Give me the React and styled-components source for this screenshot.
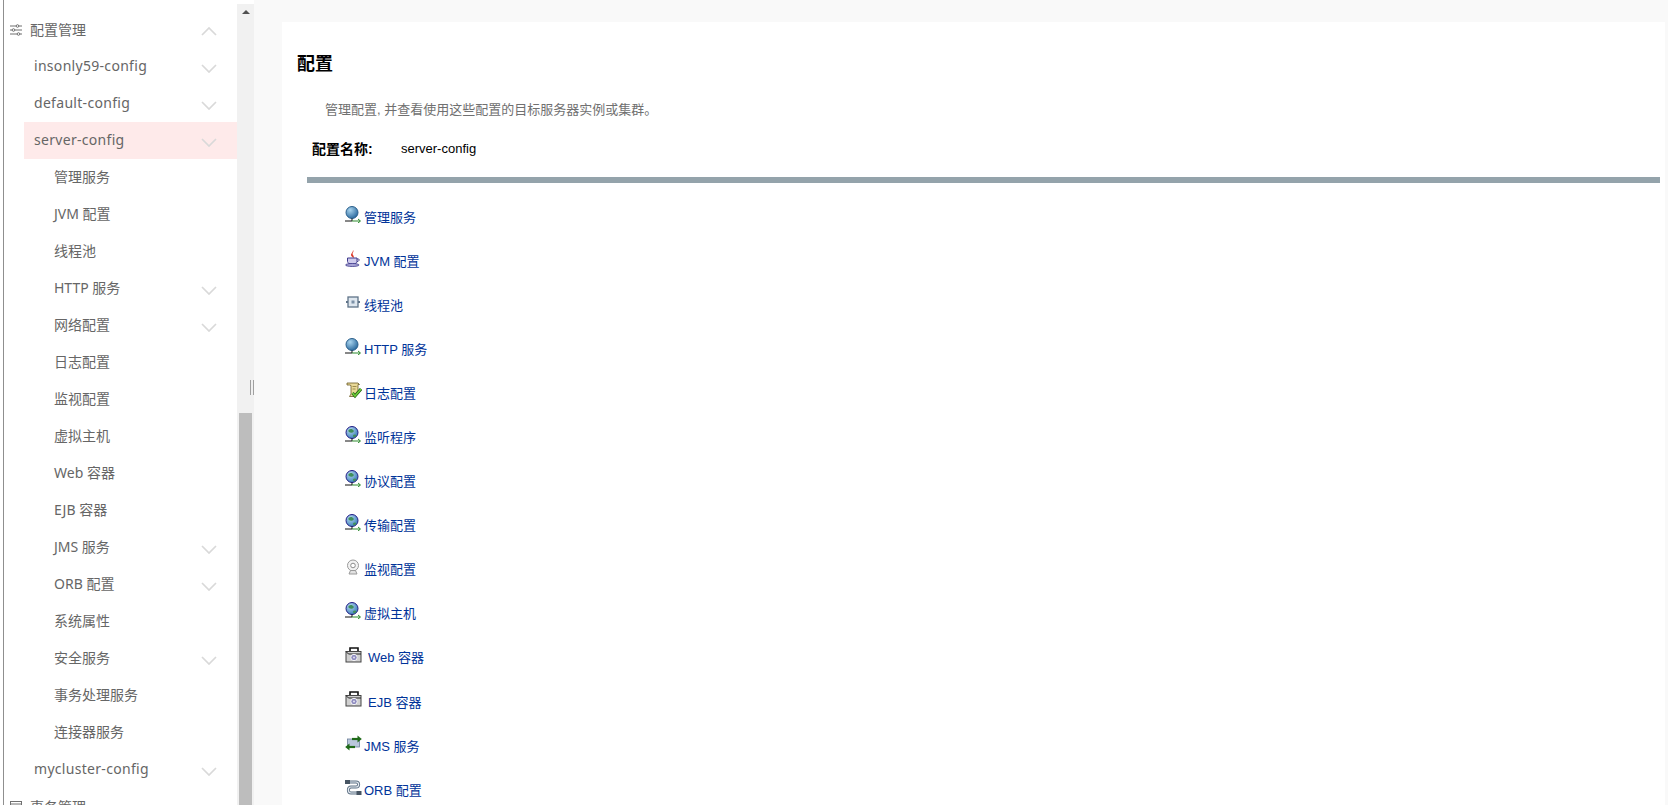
import React from 'react'
import styled, { createGlobalStyle } from 'styled-components'

const GlobalStyle = createGlobalStyle`
  html, body { margin: 0; padding: 0; height: 100%; overflow: hidden; background: #fff; }
  * { box-sizing: border-box; }
`

const Chevron = ({ up }) => (
  <ChevronSvg viewBox="0 0 16 9">
    <polyline points={up ? '1,8 8,1 15,8' : '1,1 8,8 15,1'} />
  </ChevronSvg>
)

const SlidersIcon = () => (
  <MenuSvg viewBox="0 0 12 12">
    <path d="M0 2h6M9 2h3M0 6h2M5 6h7M0 10h7M10 10h2" />
    <circle cx="7.500" cy="2" r="1.300" />
    <circle cx="3.500" cy="6" r="1.300" />
    <circle cx="8.500" cy="10" r="1.300" />
  </MenuSvg>
)

const ListIcon = () => (
  <MenuSvg viewBox="0 0 12 12">
    <rect x="0.500" y="0.500" width="11" height="11" />
    <path d="M0.500 3h11M3 6h6M3 8.500h6" />
  </MenuSvg>
)

// 地球 + 网络线,几个入口用的同一种图标
const GlobeIcon = ({ dark }) => (
  <svg width="17" height="17" viewBox="0 0 17 17">
    <defs>
      <radialGradient id="globeBlue" cx="35%" cy="30%" r="80%">
        <stop offset="0" stopColor="#a9d4ee" />
        <stop offset="1" stopColor="#1f5f96" />
      </radialGradient>
      <radialGradient id="globeDark" cx="35%" cy="30%" r="80%">
        <stop offset="0" stopColor="#b7d6f0" />
        <stop offset="1" stopColor="#2f78b4" />
      </radialGradient>
    </defs>
    <circle cx="7" cy="6.500" r="6" fill={dark ? 'url(#globeDark)' : 'url(#globeBlue)'} stroke={dark ? '#221c86' : '#2a5f8c'} />
    {dark && <path d="M3.500 4c2-1.800 4-1 5 .3s-.7 2.700-2.300 2.500S2.800 5.800 3.500 4zM8 9c1.200-.8 2.800-.8 3.500 0-.5 1.500-1.500 2.300-3 2.500z" fill="#3f8f5a" />}
    <path d="M7 12.500V15M0 15h7" stroke="#111" fill="none" />
    <path d="M7 15h8M13 13l2.500 2-2.500 2" stroke="#2c8a2c" fill="none" />
  </svg>
)

const CupIcon = () => (
  <svg width="16" height="17" viewBox="0 0 16 17">
    <path d="M8 0c1.500 2-1.500 3 0 5 1 1.300 1 2 .5 3C7 6.500 5 6 6.500 3.500 7.200 2.400 8 1.500 8 0z" fill="#dc3a2a" />
    <path d="M2.500 8h9.500v3.500c0 1.500-1.500 2.500-4.700 2.500S2.500 13 2.500 11.500z" fill="#cfcbec" stroke="#3f3a8c" />
    <path d="M12 9h1.500c1 0 1 2.500-1.500 2.500" fill="none" stroke="#3f3a8c" />
    <ellipse cx="7.300" cy="15" rx="6.800" ry="1.500" fill="#a9a5d6" stroke="#3f3a8c" strokeWidth=".8" />
  </svg>
)

const PoolIcon = () => (
  <svg width="16" height="16" viewBox="0 0 16 16">
    <path d="M1 8h14" stroke="#5f7388" strokeWidth="2" />
    <rect x="3" y="3" width="10" height="10" fill="#dfe7ef" stroke="#5f7388" strokeWidth="1.300" />
    <rect x="6.500" y="6.500" width="3" height="3" fill="#7d92a8" />
  </svg>
)

const LogIcon = () => (
  <svg width="17" height="17" viewBox="0 0 17 17">
    <path d="M2 1h11l1.500 1.500H13v6l-4 6H4.500L6 12V3.500L4.500 3H2z" fill="#e9d998" stroke="#6b5a26" strokeWidth=".8" />
    <path d="M7.500 4.500h4M7.500 7h3" stroke="#8a7838" strokeWidth=".8" />
    <path d="M7.500 11l2.500 3 6-7" stroke="#215f10" strokeWidth="3" fill="none" />
    <path d="M7.500 11l2.500 3 6-7" stroke="#6fce3a" strokeWidth="1.600" fill="none" />
  </svg>
)

const CameraIcon = () => (
  <svg width="16" height="16" viewBox="0 0 16 16">
    <circle cx="8" cy="6.500" r="5.500" fill="#f2f2f2" stroke="#9a9a9a" />
    <circle cx="8" cy="6.500" r="2.300" fill="#fff" stroke="#8d8d8d" />
    <path d="M4 15h8l-1.500-3.500h-5z" fill="#e2e2e2" stroke="#9a9a9a" />
  </svg>
)

const ContainerIcon = () => (
  <svg width="18" height="16" viewBox="0 0 18 16">
    <path d="M5 4.500V1h8v3.500" fill="none" stroke="#111" strokeWidth="1.600" />
    <rect x="1" y="4.500" width="15" height="10.500" fill="#d0d0d0" stroke="#444" />
    <path d="M1 4.500l2.500 2.500H16" fill="none" stroke="#222" />
    <circle cx="9" cy="10.500" r="3.200" fill="#8f8cc0" stroke="#f5f5f5" />
    <circle cx="9" cy="10.500" r="1" fill="#e3e3f2" />
  </svg>
)

const ArrowsIcon = () => (
  <svg width="17" height="16" viewBox="0 0 17 16">
    <rect x="2.500" y="4" width="12" height="8" fill="#b9c7dc" stroke="#6c7f99" strokeWidth=".8" />
    <path d="M7 4h6" stroke="#1f6a18" strokeWidth="2.200" />
    <path d="M12.500 .5L16.800 4l-4.300 3.500z" fill="#1f6a18" />
    <path d="M4 12h6" stroke="#1f6a18" strokeWidth="2.200" />
    <path d="M4.500 8.500L.2 12l4.300 3.500z" fill="#1f6a18" />
  </svg>
)

const OrbIcon = () => (
  <svg width="17" height="17" viewBox="0 0 17 17">
    <path d="M2 3h9c3.500 0 3.500 5 0 5H6c-3.500 0-3.500 6 0 6h8" fill="none" stroke="#5f7285" strokeWidth="3" />
    <path d="M2 3h9c3.500 0 3.500 5 0 5H6c-3.500 0-3.500 6 0 6h8" fill="none" stroke="#e4eaf1" strokeWidth="1.200" />
    <rect x="0" y="1" width="5" height="4" fill="#465462" />
    <rect x="11.500" y="12" width="5" height="4" fill="#465462" />
  </svg>
)

const subItems = [
  { label: '管理服务' },
  { label: 'JVM 配置' },
  { label: '线程池' },
  { label: 'HTTP 服务', arrow: true },
  { label: '网络配置', arrow: true },
  { label: '日志配置' },
  { label: '监视配置' },
  { label: '虚拟主机' },
  { label: 'Web 容器' },
  { label: 'EJB 容器' },
  { label: 'JMS 服务', arrow: true },
  { label: 'ORB 配置', arrow: true },
  { label: '系统属性' },
  { label: '安全服务', arrow: true },
  { label: '事务处理服务' },
  { label: '连接器服务' },
]

const links = [
  { label: '管理服务', icon: <GlobeIcon /> },
  { label: 'JVM 配置', icon: <CupIcon /> },
  { label: '线程池', icon: <PoolIcon /> },
  { label: 'HTTP 服务', icon: <GlobeIcon /> },
  { label: '日志配置', icon: <LogIcon /> },
  { label: '监听程序', icon: <GlobeIcon dark /> },
  { label: '协议配置', icon: <GlobeIcon dark /> },
  { label: '传输配置', icon: <GlobeIcon dark /> },
  { label: '监视配置', icon: <CameraIcon /> },
  { label: '虚拟主机', icon: <GlobeIcon dark /> },
  { label: 'Web 容器', icon: <ContainerIcon />, wide: true },
  { label: 'EJB 容器', icon: <ContainerIcon />, wide: true },
  { label: 'JMS 服务', icon: <ArrowsIcon /> },
  { label: 'ORB 配置', icon: <OrbIcon /> },
]

const App = () => {
  return (
    <Page>
      <GlobalStyle />
      <Sidebar>
        <Nav>
          <TopRow><SlidersIcon /><span>配置管理</span><Chevron up /></TopRow>
          <ConfigRow><span>insonly59-config</span><Chevron /></ConfigRow>
          <ConfigRow><span>default-config</span><Chevron /></ConfigRow>
          <ConfigRow $active><span>server-config</span><Chevron /></ConfigRow>
          {subItems.map((item) => (
            <SubRow key={item.label}>
              <span>{item.label}</span>
              {item.arrow && <Chevron />}
            </SubRow>
          ))}
          <ConfigRow><span>mycluster-config</span><Chevron /></ConfigRow>
          <TopRow><ListIcon /><span>事务管理</span></TopRow>
        </Nav>
        <ScrollTrack>
          <ScrollArrow />
          <ScrollThumb />
          <Grip />
        </ScrollTrack>
      </Sidebar>
      <Main>
        <Card>
          <Heading>配置</Heading>
          <Description>管理配置, 并查看使用这些配置的目标服务器实例或集群。</Description>
          <NameRow>
            <NameLabel>配置名称:</NameLabel>
            <span>server-config</span>
          </NameRow>
          <Bar />
          <LinkList>
            {links.map((link) => (
              <LinkRow key={link.label} $wide={link.wide}>
                <IconBox>{link.icon}</IconBox>
                <LinkText>{link.label}</LinkText>
              </LinkRow>
            ))}
          </LinkList>
        </Card>
      </Main>
    </Page>
  )
}

export default App

const Page = styled.div`
  display: flex;
  width: 1668px;
  height: 805px;
  overflow: hidden;
  background: #fff;
  font-family: "Liberation Sans", "Noto Sans CJK SC", sans-serif;
`

const Sidebar = styled.div`
  display: flex;
  flex: none;
  width: 251px;
  height: 805px;
  margin-left: 3px;
  background: #fff;
  border-left: 1px solid #8f8f8f;
`

const Nav = styled.div`
  flex: none;
  width: 233px;
  padding-top: 11px;
  font-family: "Noto Sans", "Noto Sans CJK SC", sans-serif;
  font-size: 14px;
  color: #666;
`

const Row = styled.div`
  display: flex;
  align-items: center;
  height: 37px;
  padding-right: 20px;

  span { flex: 1; padding-bottom: 3px; white-space: nowrap; }
`

const TopRow = styled(Row)`
  padding-left: 6px;

  span { margin-left: 8px; padding-bottom: 2px; }
`

const ConfigRow = styled(Row)`
  margin-left: 20px;
  padding-left: 10px;
  background: ${(p) => (p.$active ? '#feeaea' : 'transparent')};

  span { letter-spacing: .3px; }
`

const SubRow = styled(Row)`
  padding-left: 50px;
`

const ChevronSvg = styled.svg`
  flex: none;
  width: 16px;
  height: 9px;
  margin-top: 3px;

  polyline { fill: none; stroke: #d9d9d9; stroke-width: 1.7; }
`

const MenuSvg = styled.svg`
  flex: none;
  width: 12px;
  height: 12px;

  path, rect, circle { fill: none; stroke: #707070; stroke-width: 1; }
`

const ScrollTrack = styled.div`
  position: relative;
  flex: none;
  width: 17px;
  height: 801px;
  margin-top: 4px;
  padding: 0 2px;
  background: #f1f1f1;
`

const ScrollArrow = styled.div`
  width: 0;
  height: 0;
  margin: 6px auto 0;
  border-left: 4px solid transparent;
  border-right: 4px solid transparent;
  border-bottom: 4px solid #505050;
`

const ScrollThumb = styled.div`
  height: 392px;
  margin-top: 399px;
  background: #bdbdbd;
`

// 分隔条上的小把手,压在滚动条上面
const Grip = styled.div`
  position: absolute;
  left: 13px;
  top: 376px;
  width: 4px;
  height: 15px;
  border-left: 1px solid #a0a0a0;
  border-right: 1px solid #a0a0a0;
`

const Main = styled.div`
  flex: 1;
  padding: 22px 3px 0 28px;
  background: #f9f9f9;
`

const Card = styled.div`
  height: 800px;
  padding: 31px 5px 0 15px;
  background: #fff;
`

const Heading = styled.h1`
  margin: 0;
  font-size: 18px;
  line-height: 22px;
  font-weight: 700;
  color: #000;
`

const Description = styled.p`
  margin: 26px 0 0 28px;
  font-size: 13px;
  line-height: 18px;
  color: #707070;
`

const NameRow = styled.div`
  display: flex;
  align-items: center;
  height: 18px;
  margin: 20px 0 0 15px;
  font-size: 13px;
  color: #000;
`

const NameLabel = styled.b`
  width: 89px;
  font-size: 14px;
`

const Bar = styled.div`
  height: 6px;
  margin: 20px 0 0 10px;
  background: #94a3ab;
`

const LinkList = styled.div`
  margin: 11px 0 0 48px;
`

const LinkRow = styled.div`
  display: flex;
  align-items: center;
  height: 44.1px;
  gap: ${(p) => (p.$wide ? '5px' : '2px')};
`

const IconBox = styled.span`
  display: flex;
  flex: none;
  min-width: 17px;
  margin-top: -4px;
`

const LinkText = styled.a`
  font-size: 13px;
  color: #003399;
`
